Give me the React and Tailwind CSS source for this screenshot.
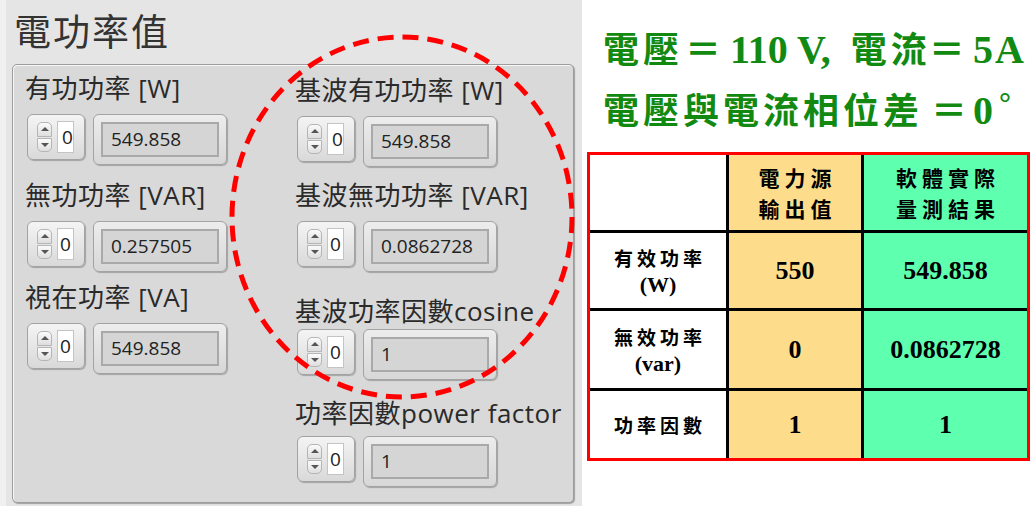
import React from "react";

const ui = { fontFamily: '"Open Sans", "Noto Sans CJK TC", sans-serif' };
const cjk = { fontFamily: '"Noto Sans CJK TC", sans-serif' };
const serif = { fontFamily: '"Liberation Serif", "Noto Sans CJK TC", serif' };

// spinner + digit box used by every control
function Spinner({ clip }) {
    return (
        <div className="w-[58px] h-[46px] rounded-[6px] border border-[#a3a3a3] bg-gradient-to-b from-[#f4f4f4] to-[#d9d9d9] shadow-[1px_1px_1px_rgba(0,0,0,0.25)] flex items-center pl-[9px] gap-[5px]">
            <div className="w-[15px] h-[30px] flex flex-col gap-[1px]">
                <div className="flex-1 rounded-t-[5px] border border-[#b5b5b5] bg-gradient-to-b from-[#fbfbfb] to-[#dedede] flex items-center justify-center">
                    <div className="w-0 h-0 border-l-[4px] border-r-[4px] border-b-[4px] border-l-transparent border-r-transparent border-b-[#555]" />
                </div>
                <div className="flex-1 rounded-b-[5px] border border-[#b5b5b5] bg-gradient-to-b from-[#fbfbfb] to-[#dedede] flex items-center justify-center">
                    <div className="w-0 h-0 border-l-[4px] border-r-[4px] border-t-[4px] border-l-transparent border-r-transparent border-t-[#555]" />
                </div>
            </div>
            <div className="w-[17px] h-[32px] bg-white border border-[#c4c4c4] overflow-hidden flex items-center">
                <span className={clip ? "text-[19px] text-[#222] pl-[4px] leading-none" : "text-[19px] text-[#222] pl-[2px] leading-none"} style={ui}>0</span>
            </div>
        </div>
    );
}

function Display({ value }) {
    return (
        <div className="w-[134px] h-[51px] rounded-[6px] border border-[#a3a3a3] bg-gradient-to-b from-[#ededed] to-[#d7d7d7] shadow-[1px_1px_1px_rgba(0,0,0,0.25)] p-[7px]">
            <div className="w-full h-full border-2 border-[#a9a9a9] bg-[#d5d5d5] flex items-center pl-[8px] text-[19px] text-[#222]" style={ui}>
                {value}
            </div>
        </div>
    );
}

function Control({ label, value, clip, className }) {
    return (
        <div className={className}>
            <div className="h-[30px] leading-[30px] text-[26px] tracking-[0.5px] text-[#2a2a2a] whitespace-nowrap" style={ui}>{label}</div>
            <div className="flex gap-[8px] ml-[2px] mt-[11px]">
                <Spinner clip={clip} />
                <Display value={value} />
            </div>
        </div>
    );
}

const rows = [
    { label: ["有效功率", "(W)"], src: "550", sw: "549.858", h: "h-[75px]" },
    { label: ["無效功率", "(var)"], src: "0", sw: "0.0862728", h: "h-[77px]" },
    { label: ["功率因數"], src: "1", sw: "1", h: "h-[67px]" },
];

export default function App() {
    return (
        <div className="w-[1033px] h-[506px] flex bg-white overflow-hidden">
            {/* LabVIEW 面板 */}
            <div className="relative shrink-0 w-[582px] h-full bg-[#e5e5e5] border-l-[6px] border-[#f0f0f0] pl-[6px]">
                <div className="h-[64px] pt-[6px] pl-[2px] text-[37px] leading-[48px] tracking-[2px] text-[#333]" style={cjk}>電功率值</div>
                <div className="w-[562px] h-[439px] rounded-[5px] border border-[#9d9d9d] bg-[#d9d9d9] shadow-[inset_1px_1px_0_#f7f7f7,1px_1px_1px_rgba(0,0,0,0.3)] flex">
                    <div className="w-[270px] pl-[12px] pt-[8px] flex flex-col">
                        <Control label="有功功率 [W]" value="549.858" clip />
                        <Control label="無功功率 [VAR]" value="0.257505" className="mt-[15px]" />
                        <Control label="視在功率 [VA]" value="549.858" className="mt-[10px]" />
                    </div>
                    <div className="pl-[12px] pt-[10px] flex flex-col">
                        <Control label="基波有功功率 [W]" value="549.858" clip />
                        <Control label="基波無功功率 [VAR]" value="0.0862728" className="mt-[13px]" />
                        <Control label="基波功率因數cosine" value="1" className="mt-[24px] [&>div:nth-child(2)]:mt-[3px]" />
                        <Control label="功率因數power factor" value="1" className="mt-[18px] [&>div:nth-child(2)]:mt-[8px]" />
                    </div>
                </div>
                {/* 紅色虛線圈 */}
                <svg className="absolute left-0 top-0 pointer-events-none" width="582" height="506">
                    <ellipse cx="396" cy="217" rx="170" ry="180" fill="none" stroke="#ff0000" strokeWidth="5" strokeDasharray="16 9" />
                </svg>
            </div>

            {/* 右側說明與表格 */}
            <div className="w-[451px] shrink-0 pl-[5px]">
                <div className="pl-[16px] pt-[22px] text-[#128a12] font-bold whitespace-nowrap">
                    <div className="h-[61px] leading-[50px] flex items-baseline">
                        <span className="text-[36px] tracking-[4px]" style={cjk}>電壓</span>
                        <span className="text-[36px] ml-[2px]" style={cjk}>＝</span>
                        <span className="text-[40px] ml-[9px]" style={serif}>110 V,</span>
                        <span className="text-[36px] tracking-[4px] ml-[20px]" style={cjk}>電流</span>
                        <span className="text-[36px] -ml-[2px]" style={cjk}>＝</span>
                        <span className="text-[40px] ml-[8px]" style={serif}>5</span>
                        <span className="text-[40px] ml-[2px]" style={serif}>A</span>
                    </div>
                    <div className="h-[50px] leading-[50px] flex items-baseline">
                        <span className="text-[36px] tracking-[4px]" style={cjk}>電壓與電流相位差</span>
                        <span className="text-[36px] ml-[8px]" style={cjk}>＝</span>
                        <span className="text-[40px] ml-[6px]" style={serif}>0</span>
                        <span className="text-[30px] ml-[6px] self-start leading-[40px]" style={serif}>°</span>
                    </div>
                </div>
                <div className="mt-[19px] w-[443px] border-[3px] border-[#ff0000] bg-black grid grid-cols-[136px_132px_163px] gap-[3px] text-black font-bold">
                    <div className="h-[75px] bg-white" />
                    <div className="h-[75px] bg-[#fddd8b] flex flex-col items-center justify-center text-[21px] leading-[31px] tracking-[5px] pl-[5px]" style={cjk}>
                        <span>電力源</span>
                        <span>輸出值</span>
                    </div>
                    <div className="h-[75px] bg-[#5fffb0] flex flex-col items-center justify-center text-[21px] leading-[31px] tracking-[5px] pl-[5px]" style={cjk}>
                        <span>軟體實際</span>
                        <span>量測結果</span>
                    </div>
                    {rows.map((r) => (
                        <React.Fragment key={r.label[0]}>
                            <div className={`${r.h} bg-white flex flex-col items-center justify-center`}>
                                <span className="text-[19px] leading-[28px] tracking-[4px] pl-[4px]" style={cjk}>{r.label[0]}</span>
                                {r.label[1] && <span className="text-[22px] leading-[26px]" style={serif}>{r.label[1]}</span>}
                            </div>
                            <div className={`${r.h} bg-[#fddd8b] flex items-center justify-center text-[26px]`} style={serif}>{r.src}</div>
                            <div className={`${r.h} bg-[#5fffb0] flex items-center justify-center text-[26px]`} style={serif}>{r.sw}</div>
                        </React.Fragment>
                    ))}
                </div>
            </div>
        </div>
    );
}
